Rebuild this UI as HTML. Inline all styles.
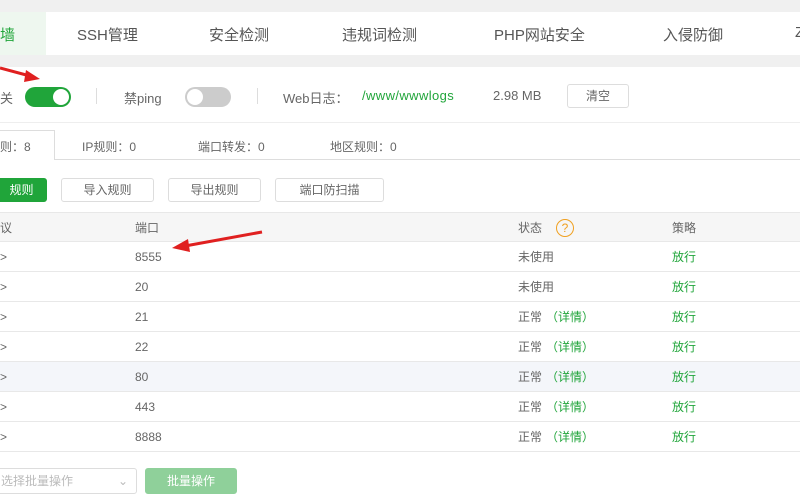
<!DOCTYPE html>
<html><head><meta charset="utf-8"><style>
*{margin:0;padding:0;box-sizing:border-box}
body{width:800px;height:500px;overflow:hidden;background:#fff;font-family:"Liberation Sans","Noto Sans CJK SC",sans-serif;font-size:13px;color:#666;position:relative}
.a{position:absolute;white-space:nowrap}
.tab{font-size:15px;color:#555;top:24px}
.tg{position:absolute;width:46px;height:20px;border-radius:10px}
.tg i{position:absolute;top:2px;width:16px;height:16px;border-radius:50%;background:#fff}
.btn{position:absolute;border:1px solid #ddd;border-radius:3px;background:#fff;text-align:center;font-size:12px;color:#666}
.row{position:absolute;left:0;width:800px;height:30px;border-bottom:1px solid #e8e8e8;font-size:12px;line-height:14px}
.row span{position:absolute;top:8px}
.g{color:#20a53a}
</style></head><body>
<div class="a" style="left:0;top:0;width:800px;height:12px;background:#f0f0f0"></div>
<div class="a" style="left:0;top:55px;width:800px;height:12px;background:#f0f0f0"></div>
<div class="a" style="left:0;top:12px;width:46px;height:43px;background:#eef7ef"></div>
<div class="a tab" style="left:0;color:#20a53a">墙</div>
<div class="a tab" style="left:77px">SSH管理</div>
<div class="a tab" style="left:209px">安全检测</div>
<div class="a tab" style="left:342px">违规词检测</div>
<div class="a tab" style="left:494px">PHP网站安全</div>
<div class="a tab" style="left:663px">入侵防御</div>
<div class="a tab" style="left:795px">Z</div>

<div class="a" style="left:0;top:88px">关</div>
<div class="tg" style="left:25px;top:87px;background:#20a53a"><i style="left:28px"></i></div>
<div class="a" style="left:96px;top:88px;width:1px;height:16px;background:#ddd"></div>
<div class="a" style="left:124px;top:88px">禁ping</div>
<div class="tg" style="left:185px;top:87px;background:#ccc"><i style="left:2px"></i></div>
<div class="a" style="left:257px;top:88px;width:1px;height:16px;background:#ddd"></div>
<div class="a" style="left:283px;top:88px">Web日志：</div>
<div class="a g" style="left:362px;top:88px;letter-spacing:0.4px">/www/wwwlogs</div>
<div class="a" style="left:493px;top:88px">2.98 MB</div>
<div class="btn" style="left:567px;top:84px;width:62px;height:24px;line-height:22px">清空</div>
<div class="a" style="left:0;top:122px;width:800px;height:1px;background:#eee"></div>

<div class="a" style="left:0;top:159px;width:800px;height:1px;background:#ddd"></div>
<div class="a" style="left:-1px;top:130px;width:56px;height:30px;border:1px solid #ddd;border-bottom:none;background:#fff"></div>
<div class="a" style="left:0;top:138px;font-size:12px">则：8</div>
<div class="a" style="left:82px;top:138px;font-size:12px">IP规则：0</div>
<div class="a" style="left:198px;top:138px;font-size:12px">端口转发：0</div>
<div class="a" style="left:330px;top:138px;font-size:12px">地区规则：0</div>

<div class="btn" style="left:-4px;top:178px;width:51px;height:24px;line-height:22px;background:#20a53a;border-color:#20a53a;color:#fff">规则</div>
<div class="btn" style="left:61px;top:178px;width:93px;height:24px;line-height:22px">导入规则</div>
<div class="btn" style="left:168px;top:178px;width:93px;height:24px;line-height:22px">导出规则</div>
<div class="btn" style="left:275px;top:178px;width:109px;height:24px;line-height:22px">端口防扫描</div>

<div class="row" style="top:212px;background:#f6f6f6;border-top:1px solid #e8e8e8"><span style="left:0">议</span><span style="left:135px">端口</span><span style="left:518px">状态</span><b style="position:absolute;left:556px;top:6px;width:18px;height:18px;border:1px solid #f0a020;border-radius:50%;color:#f0a020;font-size:12px;text-align:center;line-height:16px;font-weight:normal">?</b><span style="left:672px">策略</span></div>
<div class="row" style="top:242px"><span style="left:0">&gt;</span><span style="left:135px">8555</span><span style="left:518px">未使用</span><span style="left:672px" class="g">放行</span></div>
<div class="row" style="top:272px"><span style="left:0">&gt;</span><span style="left:135px">20</span><span style="left:518px">未使用</span><span style="left:672px" class="g">放行</span></div>
<div class="row" style="top:302px"><span style="left:0">&gt;</span><span style="left:135px">21</span><span style="left:518px">正常</span><span style="left:546px" class="g">（详情）</span><span style="left:672px" class="g">放行</span></div>
<div class="row" style="top:332px"><span style="left:0">&gt;</span><span style="left:135px">22</span><span style="left:518px">正常</span><span style="left:546px" class="g">（详情）</span><span style="left:672px" class="g">放行</span></div>
<div class="row" style="top:362px;background:#f4f6fa"><span style="left:0">&gt;</span><span style="left:135px">80</span><span style="left:518px">正常</span><span style="left:546px" class="g">（详情）</span><span style="left:672px" class="g">放行</span></div>
<div class="row" style="top:392px"><span style="left:0">&gt;</span><span style="left:135px">443</span><span style="left:518px">正常</span><span style="left:546px" class="g">（详情）</span><span style="left:672px" class="g">放行</span></div>
<div class="row" style="top:422px"><span style="left:0">&gt;</span><span style="left:135px">8888</span><span style="left:518px">正常</span><span style="left:546px" class="g">（详情）</span><span style="left:672px" class="g">放行</span></div>

<div class="btn" style="left:-4px;top:468px;width:141px;height:26px;line-height:24px;text-align:left;padding-left:4px;color:#bbb">选择批量操作 <span style="position:absolute;right:8px">⌄</span></div>
<div class="btn" style="left:145px;top:468px;width:92px;height:26px;line-height:24px;background:#8fd09a;border-color:#8fd09a;color:#fff">批量操作</div>

<svg class="a" style="left:0;top:0" width="800" height="500">
<g stroke="#e02020" stroke-width="3" fill="#e02020">
<line x1="0" y1="68" x2="30" y2="76"/><polygon points="40,79 26,70 24,82" stroke="none"/>
<line x1="262" y1="232" x2="185" y2="246"/><polygon points="172,248 188,239 190,252" stroke="none"/>
</g></svg>
</body></html>
